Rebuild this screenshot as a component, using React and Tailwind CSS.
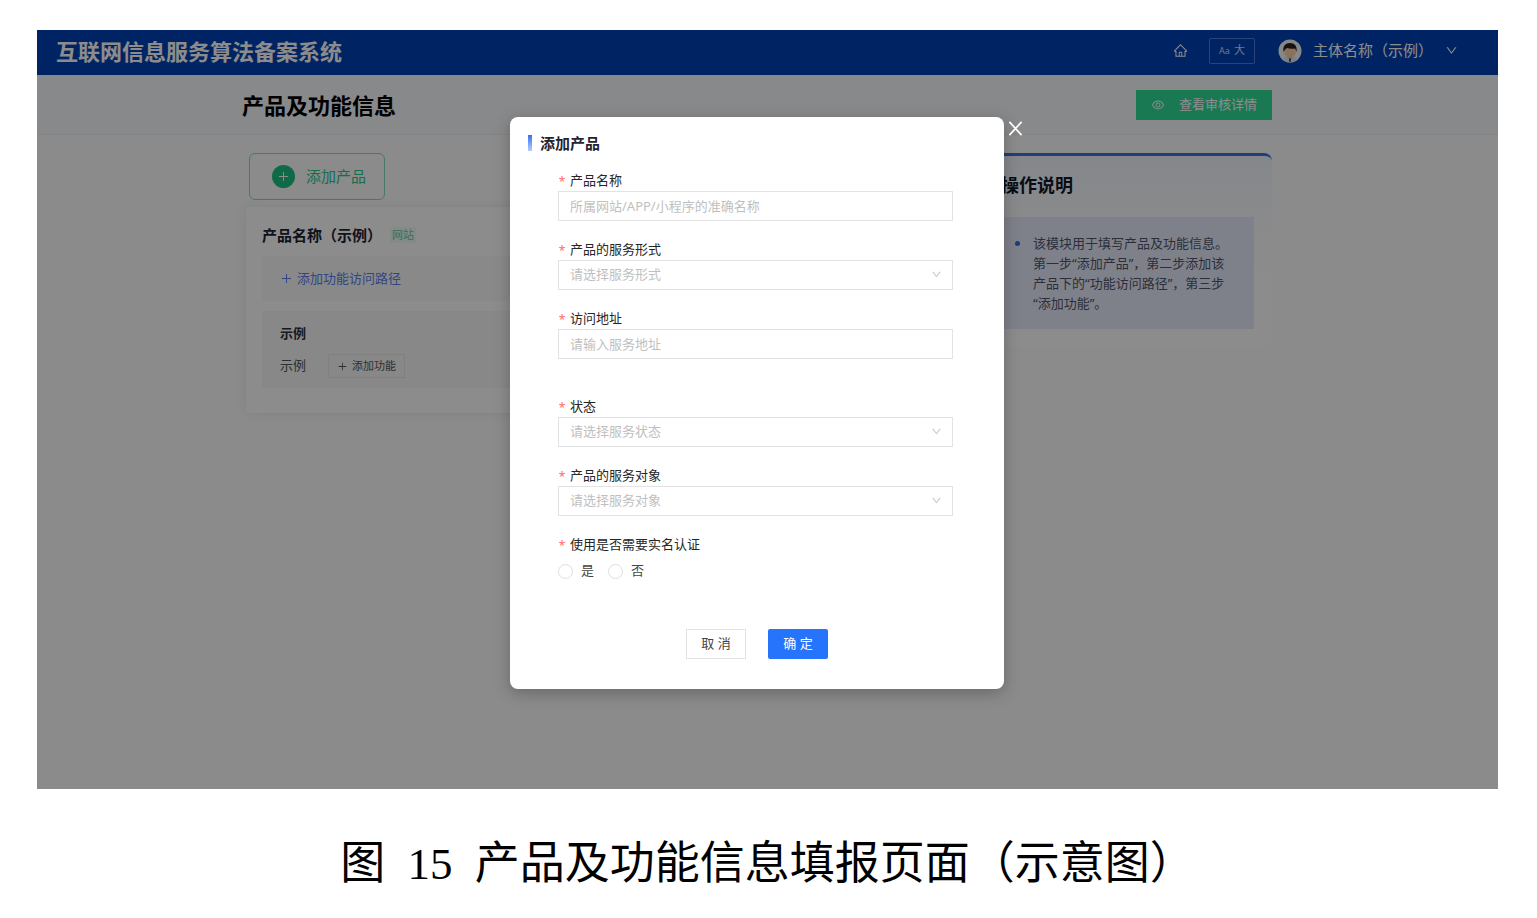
import { useState } from "react";
import {
  AiOutlineDown,
  AiOutlineEye,
  AiOutlineHome,
  AiOutlinePlus,
} from "react-icons/ai";

const fields = [
  { id: "name", label: "产品名称", type: "text", placeholder: "所属网站/APP/小程序的准确名称" },
  { id: "form", label: "产品的服务形式", type: "select", placeholder: "请选择服务形式" },
  { id: "address", label: "访问地址", type: "text", placeholder: "请输入服务地址", spaced: true },
  { id: "status", label: "状态", type: "select", placeholder: "请选择服务状态" },
  { id: "target", label: "产品的服务对象", type: "select", placeholder: "请选择服务对象" },
];

function Avatar() {
  return (
    <svg viewBox="0 0 24 24" className="size-6 shrink-0" aria-hidden="true">
      <circle cx="12" cy="12" r="11.5" fill="#f4f6fa" />
      <path d="M5 21c1-3 4-4 7-4s6 1 7 4a11.500 11.500 0 0 1-14 0z" fill="#dfe6f2" />
      <path d="M9.500 16h5v2.500L12 20.500l-2.500-2z" fill="#f0bd94" />
      <path d="M11 20l1-1 1 1-.4 3h-1.200z" fill="#1d3a6e" />
      <ellipse cx="12" cy="12.500" rx="6" ry="6" fill="#fbd0a8" />
      <path d="M5.500 13C4.500 7 7.500 4 12 4s7.500 3 6.500 9c-.6-1.500-.8-2.500-1.500-3.500-3 .6-6 .3-8-.5-1.500 1-2.800 2.500-3.500 4z" fill="#2b2320" />
    </svg>
  );
}

function TopBar() {
  return (
    <header className="flex h-[45px] items-center justify-between bg-[#0043b4] pr-10 pb-1 pl-[19px] text-white">
      <h1 className="text-[22px] leading-none font-bold">互联网信息服务算法备案系统</h1>
      <div className="flex items-center">
        <a href="#home" aria-label="首页">
          <AiOutlineHome className="size-[15px]" />
        </a>
        <button
          type="button"
          className="ml-[21px] flex h-[26px] w-[46px] items-center justify-center gap-1 rounded-xs border border-[#4a7fd6] text-[11px] text-[#c8daf8]"
        >
          <span className="text-[9px]">Aa</span>
          <span>大</span>
        </button>
        <button type="button" className="ml-[23px] flex items-center text-[15px]">
          <Avatar />
          <span className="ml-[11px]">主体名称（示例）</span>
          <AiOutlineDown className="ml-3 size-[13px]" />
        </button>
      </div>
    </header>
  );
}

function PageTitle() {
  return (
    <div className="border-b border-[#eceef2] bg-[#f7f9fc] pr-[21px]">
      <div className="mx-auto flex h-[59px] max-w-[1030px] items-center justify-between">
        <h2 className="text-[22px] leading-none font-bold text-black">产品及功能信息</h2>
        <button
          type="button"
          className="flex h-[30px] items-center gap-[14px] bg-[#2edc98] px-[15px] text-[13px] text-white"
        >
          <AiOutlineEye className="size-[14px]" />
          查看审核详情
        </button>
      </div>
    </div>
  );
}

function ProductList() {
  return (
    <div className="min-w-0 flex-1 pl-1">
      <button
        type="button"
        className="ml-[3px] flex h-[47px] items-center gap-[11px] rounded-md border border-[#82dcb8] pr-[18px] pl-[22px] text-[15px] text-[#2cc78b]"
      >
        <span className="flex size-[23px] items-center justify-center rounded-full bg-[#1ec283] text-white">
          <AiOutlinePlus className="size-[13px]" />
        </span>
        添加产品
      </button>

      <div className="mt-[7px] rounded-sm bg-white px-4 pt-4 pb-[25px] shadow-[0_0_12px_rgba(0,0,0,0.08)]">
        <div className="flex h-6 items-center gap-2">
          <h3 className="text-[15px] font-bold text-[#1a2233]">产品名称（示例）</h3>
          <span className="rounded-xs bg-[#effbf6] px-0.5 text-[11px] leading-4 text-[#5fcfa5]">网站</span>
        </div>
        <div className="mt-[9px] flex h-[45px] items-center bg-[#fafafa] px-[18px]">
          <a href="#path" className="flex items-center gap-1 text-[13px] text-[#5a7ff0]">
            <AiOutlinePlus className="size-[13px]" />
            添加功能访问路径
          </a>
        </div>
        <div className="mt-[10px] bg-[#f7f7f7] px-[18px] py-[10px] text-[13px]">
          <h4 className="leading-6 font-bold text-[#2a2f3a]">示例</h4>
          <div className="mt-[9px] flex h-6 items-center gap-[22px] text-[#555555]">
            <span>示例</span>
            <button
              type="button"
              className="flex h-6 items-center gap-1 border border-[#eaeaea] px-2 text-[11px] text-[#555555]"
            >
              <AiOutlinePlus className="size-[11px]" />
              添加功能
            </button>
          </div>
        </div>
      </div>
    </div>
  );
}

function Guide() {
  return (
    <aside className="w-[295px] shrink-0 rounded-lg border-t-3 border-[#3a74e0] bg-linear-to-b from-[#f2f6fe] to-white to-60% px-[18px] pt-[17px] pb-[18px]">
      <h3 className="ml-[6px] text-[18px] leading-6 font-bold text-[#101828]">操作说明</h3>
      <ul className="mt-5 bg-[#e8ecfc] px-5 py-4">
        <li className="flex gap-[13px] text-[13px] leading-5 text-[#51566a]">
          <span className="mt-2 size-[5px] shrink-0 rounded-full bg-[#2f6fe8]" />
          <span>
            该模块用于填写产品及功能信息。第一步“添加产品”，第二步添加该产品下的“功能访问路径”，第三步
            <wbr />
            “添加功能”。
          </span>
        </li>
      </ul>
    </aside>
  );
}

function RequiredMark() {
  return <span className="w-2 pt-0.5 text-center text-[12px] text-[#ff6b6b]">*</span>;
}

function Field({ field }) {
  const box = "h-[30px] w-full border border-[#e3e3e3] bg-white px-[11px] text-[13px] outline-none";

  return (
    <div className={field.spaced ? "mb-[37px]" : "mb-[18px]"}>
      <label htmlFor={field.id} className="flex h-[21px] items-center gap-1 text-[13px] text-[#262626]">
        <RequiredMark />
        {field.label}
      </label>
      {field.type === "select" ? (
        <div className="relative">
          <select id={field.id} defaultValue="" className={`${box} appearance-none text-[#bfbfbf]`}>
            <option value="">{field.placeholder}</option>
          </select>
          <AiOutlineDown className="pointer-events-none absolute top-[9px] right-[11px] size-[11px] text-[#bfbfbf]" />
        </div>
      ) : (
        <input id={field.id} type="text" placeholder={field.placeholder} className={`${box} placeholder:text-[#bfbfbf]`} />
      )}
    </div>
  );
}

function AddProductDialog() {
  const [realName, setRealName] = useState(null);

  return (
    <div role="dialog" aria-label="添加产品" className="flex items-start">
      <form
        onSubmit={(e) => e.preventDefault()}
        className="w-[494px] rounded-lg bg-white pt-4 pb-[30px] shadow-[0_4px_16px_rgba(0,0,0,0.25)]"
      >
        <h2 className="flex h-5 items-center gap-2 pl-[18px] text-[15px] font-bold text-[#1f2430]">
          <span className="h-4 w-1 bg-linear-to-b from-[#3a6df0] to-[#b5cdfb]" />
          添加产品
        </h2>

        <div className="mt-[17px] pr-[51px] pl-12">
          {fields.map((field) => (
            <Field key={field.id} field={field} />
          ))}

          <fieldset>
            <legend className="flex h-[21px] items-center gap-1 text-[13px] text-[#262626]">
              <RequiredMark />
              使用是否需要实名认证
            </legend>
            <div className="mt-[6px] flex gap-[14px] text-[13px] text-[#444444]">
              {["是", "否"].map((option) => (
                <label key={option} className="flex h-5 items-center gap-2">
                  <input
                    type="radio"
                    name="realName"
                    checked={realName === option}
                    onChange={() => setRealName(option)}
                    className="size-[15px] appearance-none rounded-full border border-[#dedede] checked:border-4 checked:border-[#2674fc]"
                  />
                  {option}
                </label>
              ))}
            </div>
          </fieldset>
        </div>

        <div className="mt-12 flex justify-center gap-[22px] text-[13px]">
          <button type="button" className="h-[30px] w-[60px] border border-[#e3e3e3] text-[#444444]">
            取 消
          </button>
          <button type="submit" className="h-[30px] w-[60px] rounded-xs bg-[#2674fc] text-white">
            确 定
          </button>
        </div>
      </form>

      <button type="button" aria-label="关闭" className="py-1 pr-0.5 pl-1 text-white">
        <svg viewBox="0 0 16 16" className="size-[15px]" fill="none" stroke="currentColor" strokeWidth="1.800">
          <path d="M1.500 1l13 14M14.500 1l-13 14" />
        </svg>
      </button>
    </div>
  );
}

export default function App() {
  return (
    <main className="bg-white pt-[30px] pr-[39px] pl-[37px] font-['Noto_Sans','Noto_Sans_CJK_SC',sans-serif]">
      <figure>
        <div className="grid">
          {/* Page behind the dialog */}
          <div className="col-start-1 row-start-1 bg-[#fdfdfd]">
            <TopBar />
            <PageTitle />
            <div className="pr-[21px]">
              <div className="mx-auto flex max-w-[1030px] items-start gap-5 pt-[18px]">
                <ProductList />
                <Guide />
              </div>
            </div>
          </div>

          {/* Mask */}
          <div className="z-10 col-start-1 row-start-1 flex items-start justify-center bg-black/45 pt-[87px] pb-[100px]">
            <AddProductDialog />
          </div>
        </div>

        <figcaption className="mt-10 pb-3 text-center text-[45px] leading-[66px] text-black">
          图<span className="mx-[11px] font-['Liberation_Serif',serif]"> 15 </span>产品及功能信息填报页面（示意图）
        </figcaption>
      </figure>
    </main>
  );
}
